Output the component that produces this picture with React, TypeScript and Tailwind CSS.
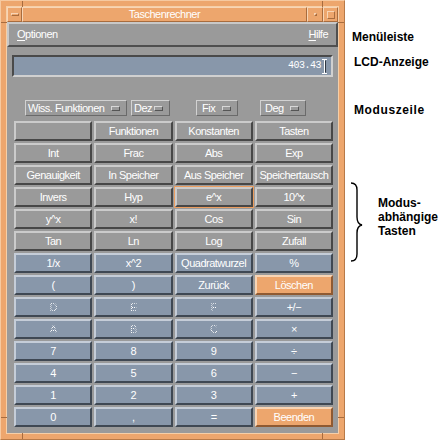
import clsx from 'clsx';

const cn = clsx;

type Tone = 'gray' | 'blue' | 'orange';

interface Key {
  label: string;
  tone: Tone;
  disabled?: boolean;
  focused?: boolean;
}

const toneClass: Record<Tone, string> = {
  gray: 'bg-[#9a9a9a] border-t-[#cbcbcb] border-l-[#cbcbcb] border-b-[#474747] border-r-[#474747]',
  blue: 'bg-[#8897aa] border-t-[#c5cdd8] border-l-[#c5cdd8] border-b-[#3f4853] border-r-[#3f4853]',
  orange: 'bg-[#eda66d] border-t-[#f8d5b5] border-l-[#f8d5b5] border-b-[#8f5a32] border-r-[#8f5a32]',
};

const g = (label: string, extra: Partial<Key> = {}): Key => ({ label, tone: 'gray', ...extra });
const b = (label: string, extra: Partial<Key> = {}): Key => ({ label, tone: 'blue', ...extra });
const o = (label: string): Key => ({ label, tone: 'orange' });

const keys: Key[][] = [
  [g(''), g('Funktionen'), g('Konstanten'), g('Tasten')],
  [g('Int'), g('Frac'), g('Abs'), g('Exp')],
  [g('Genauigkeit'), g('In Speicher'), g('Aus Speicher'), g('Speichertausch')],
  [g('Invers'), g('Hyp'), g('e^x', { focused: true }), g('10^x')],
  [g('y^x'), g('x!'), g('Cos'), g('Sin')],
  [g('Tan'), g('Ln'), g('Log'), g('Zufall')],
  [b('1/x'), b('x^2'), b('Quadratwurzel'), b('%')],
  [b('('), b(')'), b('Zurück'), o('Löschen')],
  [b('D', { disabled: true }), b('E', { disabled: true }), b('F', { disabled: true }), b('+/−')],
  [b('A', { disabled: true }), b('B', { disabled: true }), b('C', { disabled: true }), b('×')],
  [b('7'), b('8'), b('9'), b('÷')],
  [b('4'), b('5'), b('6'), b('−')],
  [b('1'), b('2'), b('3'), b('+')],
  [b('0'), b(','), b('='), o('Beenden')],
];

const raisedOrange = 'border border-t-[#f8d5b5] border-l-[#f8d5b5] border-b-[#a86c3e] border-r-[#a86c3e]';

function CalcKey({ k }: { k: Key }) {
  return (
    <div
      className={cn(
        'flex h-[20px] items-center justify-center border-2 text-[11px] leading-none tracking-[-0.5px] text-white',
        toneClass[k.tone],
        k.focused && 'outline outline-1 outline-[#eb9d5f]',
      )}
    >
      {k.disabled ? (
        <span className="bg-[repeating-conic-gradient(#ffffff_0_25%,transparent_0_50%)] bg-[length:2px_2px] bg-clip-text text-transparent">
          {k.label}
        </span>
      ) : (
        <span>{k.label}</span>
      )}
    </div>
  );
}

function OptionMenu({ label, width, className }: { label: string; width: string; className?: string }) {
  return (
    <div
      className={cn(
        'flex h-[16px] items-center justify-between border border-t-[#d2d2d2] border-l-[#d2d2d2] border-b-[#6a6a6a] border-r-[#6a6a6a] pl-[2px] pr-[6px] text-[11px] leading-none tracking-[-0.5px] text-white',
        width,
        className,
      )}
    >
      <span>{label}</span>
      <span className="h-[5px] w-[9px] shrink-0 border border-t-[#d8d8d8] border-l-[#d8d8d8] border-b-[#555555] border-r-[#555555]" />
    </div>
  );
}

function Window() {
  return (
    <div className="relative h-[440px] w-[345px] shrink-0 border border-t-[#f6c9a0] border-l-[#f6c9a0] border-b-[#b87a48] border-r-[#b87a48] bg-[#eda66d] p-[5px]">
      {/* resize corner marks */}
      <span className="absolute left-[21px] top-0 h-[6px] w-px bg-[#a86c3e]" />
      <span className="absolute left-0 top-[21px] h-px w-[6px] bg-[#a86c3e]" />
      <span className="absolute right-[21px] top-0 h-[6px] w-px bg-[#a86c3e]" />
      <span className="absolute right-0 top-[21px] h-px w-[6px] bg-[#a86c3e]" />
      <span className="absolute bottom-0 left-[21px] h-[6px] w-px bg-[#a86c3e]" />
      <span className="absolute bottom-[21px] left-0 h-px w-[6px] bg-[#a86c3e]" />
      <span className="absolute bottom-0 right-[21px] h-[6px] w-px bg-[#a86c3e]" />
      <span className="absolute bottom-[21px] right-0 h-px w-[6px] bg-[#a86c3e]" />

      <div className="flex h-full flex-col border border-[#f5cfa8]">
        {/* title bar */}
        <div className="flex h-[15px] bg-[#eda66d]">
          <div className={cn('flex w-[15px] items-center justify-center', raisedOrange)}>
            <span className={cn('h-[3px] w-[8px]', raisedOrange)} />
          </div>
          <div className={cn('flex flex-1 items-center justify-center text-[11px] leading-none tracking-[-0.5px] text-white', raisedOrange)}>
            Taschenrechner
          </div>
          <div className={cn('flex w-[16px] items-center justify-center', raisedOrange)}>
            <span className={cn('h-[3px] w-[3px]', raisedOrange)} />
          </div>
          <div className={cn('flex w-[15px] items-center justify-center', raisedOrange)}>
            <span className={cn('h-[8px] w-[8px]', raisedOrange)} />
          </div>
        </div>

        {/* menu bar */}
        <div className="flex h-[25px] items-center justify-between border-2 border-t-[#c8c8c8] border-l-[#c8c8c8] border-b-[#4f4f4f] border-r-[#4f4f4f] bg-[#9a9a9a] px-[8px] text-[11px] leading-none tracking-[-0.5px] text-white">
          <span>
            <span className="underline underline-offset-[2px]">O</span>ptionen
          </span>
          <span>
            <span className="underline underline-offset-[2px]">H</span>ilfe
          </span>
        </div>

        {/* main panel */}
        <div className="flex flex-1 flex-col bg-[#9a9a9a] pt-[8px]">
          <div className="ml-[5px] flex h-[22px] w-[321px] items-center justify-end border-2 border-t-[#4a4a4a] border-l-[#4a4a4a] border-b-[#d0d0d0] border-r-[#d0d0d0] bg-[#8897aa] pr-[3px]">
            <span className="font-['Liberation_Mono',monospace] text-[10px] leading-none tracking-[-0.5px] text-white">403.43</span>
            <svg width="6" height="15" viewBox="0 0 6 15" className="ml-px">
              <path d="M0 0.5H5M2.5 0.5V14.5M0 14.5H5" stroke="#ffffff" strokeWidth="1" fill="none" />
              <path d="M3.5 1.5V13.5" stroke="#2f3640" strokeWidth="1" fill="none" />
            </svg>
          </div>

          <div className="mt-[23px] flex">
            <OptionMenu label="Wiss. Funktionen" width="w-[102px]" className="ml-[18px]" />
            <OptionMenu label="Dez" width="w-[39px]" className="ml-[4px] pr-[5px]" />
            <OptionMenu label="Fix" width="w-[42px]" className="ml-[26px] pl-[5px]" />
            <OptionMenu label="Deg" width="w-[46px]" className="ml-[22px] pl-[4px]" />
          </div>

          <div className="ml-[7px] mt-[5px] grid w-[319px] grid-cols-4 gap-x-[2px] gap-y-[2px]">
            {keys.flat().map((k, i) => (
              <CalcKey key={i} k={k} />
            ))}
          </div>
        </div>
      </div>
    </div>
  );
}

function Notes() {
  return (
    <div className="flex flex-1 flex-col pt-[30px] text-[12px] font-bold leading-[14px] text-black">
      <span className="ml-[7px]">Menüleiste</span>
      <span className="ml-[9px] mt-[11px]">LCD-Anzeige</span>
      <span className="ml-[9px] mt-[34px] tracking-[0.6px]">Moduszeile</span>
      <div className="mt-[65px] flex">
        <svg width="14" height="80" viewBox="0 0 14 80" className="ml-[5px] shrink-0">
          <path
            d="M1 1 Q7 1 7 8 L7 35 Q7 42 12 43 Q7 44 7 51 L7 72 Q7 79 1 79"
            stroke="#000000"
            strokeWidth="1.4"
            fill="none"
          />
        </svg>
        <div className="ml-[14px] mt-[14px] flex flex-col">
          <span>Modus-</span>
          <span>abhängige</span>
          <span>Tasten</span>
        </div>
      </div>
    </div>
  );
}

export default function App() {
  return (
    <div className="flex h-[440px] w-[445px] bg-white font-['Liberation_Sans',Arial,sans-serif]">
      <Window />
      <Notes />
    </div>
  );
}
